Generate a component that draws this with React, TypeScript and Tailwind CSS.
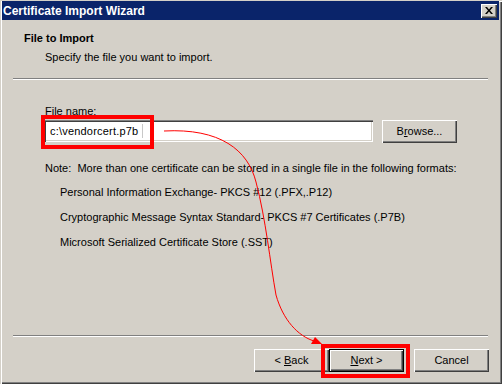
import React from "react";

const bevel =
  "shadow-[inset_1px_1px_0_#ffffff,inset_-1px_-1px_0_#404040,inset_-2px_-2px_0_#808080]";

function Btn({ children, def = false }: { children: React.ReactNode; def?: boolean }) {
  if (def) {
    return (
      <div className="w-[75px] h-[23px] border border-black bg-[#d4d0c8] flex">
        <div className={`flex-1 flex items-center justify-center ${bevel}`}>{children}</div>
      </div>
    );
  }
  return (
    <div className={`w-[75px] h-[23px] bg-[#d4d0c8] flex items-center justify-center ${bevel}`}>
      {children}
    </div>
  );
}

export default function App() {
  return (
    <div
      className="relative w-[502px] h-[384px] bg-[#d4d0c8] overflow-hidden text-black text-[11px] leading-[13px] flex flex-col shadow-[inset_1px_1px_0_#d4d0c8,inset_2px_2px_0_#ffffff,inset_-1px_-1px_0_#404040,inset_-2px_-2px_0_#808080]"
      style={{ fontFamily: '"Liberation Sans", Arial, sans-serif' }}
    >
      {/* Title bar */}
      <div className="mt-[1px] ml-[2px] mr-[3px] h-[19px] bg-[#0a246a] flex items-center justify-between pl-[1px] pr-[2px]">
        <span className="text-white font-bold text-[12px] leading-[14px]">Certificate Import Wizard</span>
        <div className={`w-[16px] h-[14px] bg-[#d4d0c8] flex items-center justify-center ${bevel}`}>
          <svg width="8" height="7" viewBox="0 0 8 7" className="-mt-[1px]">
            <path d="M0 0h2l2 2.5L6 0h2L5 3.5 8 7H6L4 4.5 2 7H0l3-3.5z" fill="#000" />
          </svg>
        </div>
      </div>

      {/* Header */}
      <div className="h-[58px] pl-[24px] pt-[12px]">
        <div className="font-bold">File to Import</div>
        <div className="ml-[21px] mt-[6px]">Specify the file you want to import.</div>
      </div>
      <div className="ml-[13px] mr-[14px] h-[2px] border-t border-t-[#808080] border-b border-b-white" />

      {/* Body */}
      <div className="flex-1 pl-[44px] flex flex-col">
        <div className="mt-[25px] pl-[1px]">File name:</div>
        <div className="mt-[2px] flex h-[23px] items-start">
          <div className="relative w-[329px] h-[22px] bg-white shadow-[inset_1px_1px_0_#808080,inset_2px_2px_0_#404040,inset_-1px_-1px_0_#ffffff,inset_-2px_-2px_0_#d4d0c8] flex items-center pl-[6px]">
            <span className="tracking-[0.2px]">c:\vendorcert.p7b</span>
            <div className="absolute left-[98px] top-[4px] w-[1px] h-[14px] bg-[#c8c8c8]" />
          </div>
          <div className="ml-[9px]">
            <Btn>
              <span>
                B<span className="underline">r</span>owse...
              </span>
            </Btn>
          </div>
        </div>
        <div className="mt-[19px] pl-[1px]">Note:&nbsp; More than one certificate can be stored in a single file in the following formats:</div>
        <div className="pl-[16px] mt-[11px]">Personal Information Exchange- PKCS #12 (.PFX,.P12)</div>
        <div className="pl-[16px] mt-[12px]">Cryptographic Message Syntax Standard- PKCS #7 Certificates (.P7B)</div>
        <div className="pl-[16px] mt-[12px]">Microsoft Serialized Certificate Store (.SST)</div>
      </div>

      {/* Footer */}
      <div className="ml-[13px] mr-[14px] h-[2px] border-t border-t-[#808080] border-b border-b-white" />
      <div className="mt-[12px] mb-[12px] h-[23px] flex justify-end pr-[13px]">
        <Btn>
          <span>
            &lt; <span className="underline">B</span>ack
          </span>
        </Btn>
        <Btn def>
          <span>
            <span className="underline">N</span>ext &gt;
          </span>
        </Btn>
        <div className="ml-[10px]">
          <Btn>Cancel</Btn>
        </div>
      </div>

      {/* Annotations */}
      <div className="absolute left-[41px] top-[115px] w-[113px] h-[34px] border-4 border-[#ff0000]" />
      <div className="absolute left-[321px] top-[344px] w-[89px] h-[34px] border-4 border-[#ff0000]" />
      <svg className="absolute left-0 top-0 pointer-events-none" width="502" height="384" viewBox="0 0 502 384">
        <path
          d="M164 131 C220 128 248 150 256 182 C266 220 270 262 276 295 C283 320 298 336 314 341"
          fill="none"
          stroke="#ff0000"
          strokeWidth="1"
        />
        <path d="M322 344 L311 344 L315 337 Z" fill="#ff0000" />
      </svg>
    </div>
  );
}
